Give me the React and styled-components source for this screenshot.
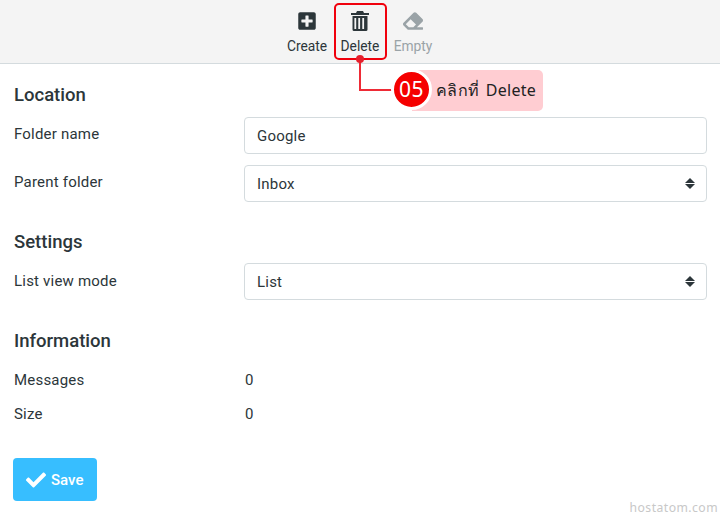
import React from 'react'
import styled, { createGlobalStyle } from 'styled-components'
import { FaPlusSquare, FaEraser, FaCheck } from 'react-icons/fa'

const GlobalStyle = createGlobalStyle`
  html, body {
    margin: 0;
    padding: 0;
    background: #fff;
    font-family: Roboto, "Noto Sans", sans-serif;
    color: #2c363a;
  }
  * { box-sizing: border-box; }
`

const Page = styled.div`
  position: relative;
  width: 720px;
  height: 515px;
  overflow: hidden;
`

const Toolbar = styled.div`
  height: 64px;
  background: #f4f4f4;
  border-bottom: 1px solid #d4dbde;
  display: flex;
  justify-content: center;
  padding-top: 11px;
`

const ToolButton = styled.div`
  width: 53px;
  display: flex;
  flex-direction: column;
  align-items: center;
  gap: 7px;
  font-size: 13.8px;
  line-height: 16px;
  color: ${p => (p.$disabled ? '#9aa3a7' : '#2c363a')};
  & svg {
    width: auto;
    height: 20px;
    display: block;
  }
`

const Form = styled.div`
  padding: 20px 13px 0 14px;
`

const Section = styled.section`
  margin-bottom: ${p => p.$after}px;
`

const Heading = styled.h2`
  margin: 0 0 ${p => p.$gap}px;
  font-size: 18.5px;
  line-height: 22px;
  font-weight: 500;
  color: #2c363a;
`

const Row = styled.div`
  display: grid;
  grid-template-columns: 230px 1fr;
  margin-bottom: 11px;
  &:last-child { margin-bottom: 0; }
`

const Label = styled.label`
  font-size: 15px;
  line-height: ${p => p.$line}px;
  letter-spacing: 0.2px;
  color: #2c363a;
`

const TextInput = styled.input`
  width: 100%;
  height: 37px;
  border: 1px solid #d4dbde;
  border-radius: 4px;
  padding: 1px 12px 0;
  font: 15px Roboto, sans-serif;
  letter-spacing: 0.2px;
  color: #2c363a;
  background: #fff;
  outline: none;
`

const SelectWrap = styled.div`
  position: relative;
  &::before, &::after {
    content: '';
    position: absolute;
    right: 12px;
    width: 0;
    height: 0;
    border-left: 5px solid transparent;
    border-right: 5px solid transparent;
  }
  &::before {
    top: 13px;
    border-bottom: 5px solid #2c363a;
  }
  &::after {
    top: 19px;
    border-top: 5px solid #2c363a;
  }
`

const Select = styled.select`
  width: 100%;
  height: 37px;
  border: 1px solid #d4dbde;
  border-radius: 4px;
  padding: 1px 12px 0;
  font: 15px Roboto, sans-serif;
  letter-spacing: 0.2px;
  color: #2c363a;
  background: #fff;
  appearance: none;
  outline: none;
`

const InfoRow = styled.div`
  display: grid;
  grid-template-columns: 231px 1fr;
  height: 34px;
  align-items: center;
  font-size: 15px;
  letter-spacing: 0.2px;
`

const SaveButton = styled.button`
  display: flex;
  align-items: center;
  gap: 5px;
  width: 84px;
  height: 43px;
  margin-left: -1px;
  padding: 0 0 0 13px;
  border: none;
  border-radius: 4px;
  background: #37beff;
  color: #fff;
  font: 500 15px Roboto, sans-serif;
  & svg { width: 20px; height: 20px; }
`

const Highlight = styled.div`
  position: absolute;
  left: 334px;
  top: 3px;
  width: 53px;
  height: 57px;
  border: 2px solid #f0000c;
  border-radius: 5px;
`

const Dot = styled.div`
  position: absolute;
  left: 356px;
  top: 55px;
  width: 8px;
  height: 8px;
  border-radius: 50%;
  background: #e5202c;
`

const Connector = styled.div`
  position: absolute;
  left: 359px;
  top: 60px;
  width: 36px;
  height: 31px;
  border-left: 2px solid #ee2b36;
  border-bottom: 2px solid #ee2b36;
`

const Callout = styled.div`
  position: absolute;
  left: 412px;
  top: 70px;
  width: 131px;
  height: 41px;
  background: #ffcdd2;
  border-radius: 0 5px 5px 0;
  display: flex;
  align-items: center;
  padding-left: 24px;
  font-family: "Noto Sans", sans-serif;
  font-size: 16px;
  word-spacing: 2px;
  letter-spacing: 0.3px;
  color: #222;
`

const Badge = styled.div`
  position: absolute;
  left: -21px;
  top: -1px;
  width: 41px;
  height: 41px;
  border: 3px solid #fff;
  border-radius: 50%;
  background: #f50000;
  color: #fff;
  font: 21px/35px "Noto Sans", sans-serif;
  text-align: center;
  letter-spacing: 0.5px;
`

const Watermark = styled.div`
  position: absolute;
  right: 2px;
  bottom: -1px;
  font: 12.2px "Noto Sans", sans-serif;
  letter-spacing: 0.45px;
  color: #c8c8c8;
`

const TrashIcon = () => (
  <svg viewBox="0 0 18 20" fill="currentColor">
    <path
      fillRule="evenodd"
      d="M6 0h6l1 2h5v2H0V2h5zM1.5 5h15v13.5a1.5 1.5 0 0 1-1.5 1.5H3a1.5 1.5 0 0 1-1.5-1.5zM3.4 7v11h1.8V7zM7.3 7v11h1.8V7zM11.3 7v11h1.8V7z"
    />
  </svg>
)

const App = () => {
  return (
    <Page>
      <GlobalStyle />
      <Toolbar>
        <ToolButton><FaPlusSquare />Create</ToolButton>
        <ToolButton><TrashIcon />Delete</ToolButton>
        <ToolButton $disabled><FaEraser />Empty</ToolButton>
      </Toolbar>
      <Form>
        <Section $after={29}>
          <Heading $gap={11}>Location</Heading>
          <Row>
            <Label $line={34}>Folder name</Label>
            <TextInput defaultValue="Google" />
          </Row>
          <Row>
            <Label $line={34}>Parent folder</Label>
            <SelectWrap>
              <Select defaultValue="Inbox"><option>Inbox</option></Select>
            </SelectWrap>
          </Row>
        </Section>
        <Section $after={30}>
          <Heading $gap={10}>Settings</Heading>
          <Row>
            <Label $line={36}>List view mode</Label>
            <SelectWrap>
              <Select defaultValue="List"><option>List</option></Select>
            </SelectWrap>
          </Row>
        </Section>
        <Section $after={27}>
          <Heading $gap={11}>Information</Heading>
          <InfoRow><span>Messages</span><span>0</span></InfoRow>
          <InfoRow><span>Size</span><span>0</span></InfoRow>
        </Section>
        <SaveButton><FaCheck />Save</SaveButton>
      </Form>
      <Highlight />
      <Connector />
      <Dot />
      <Callout>
        <Badge>05</Badge>
        คลิกที่ Delete
      </Callout>
      <Watermark>hostatom.com</Watermark>
    </Page>
  )
}

export default App
